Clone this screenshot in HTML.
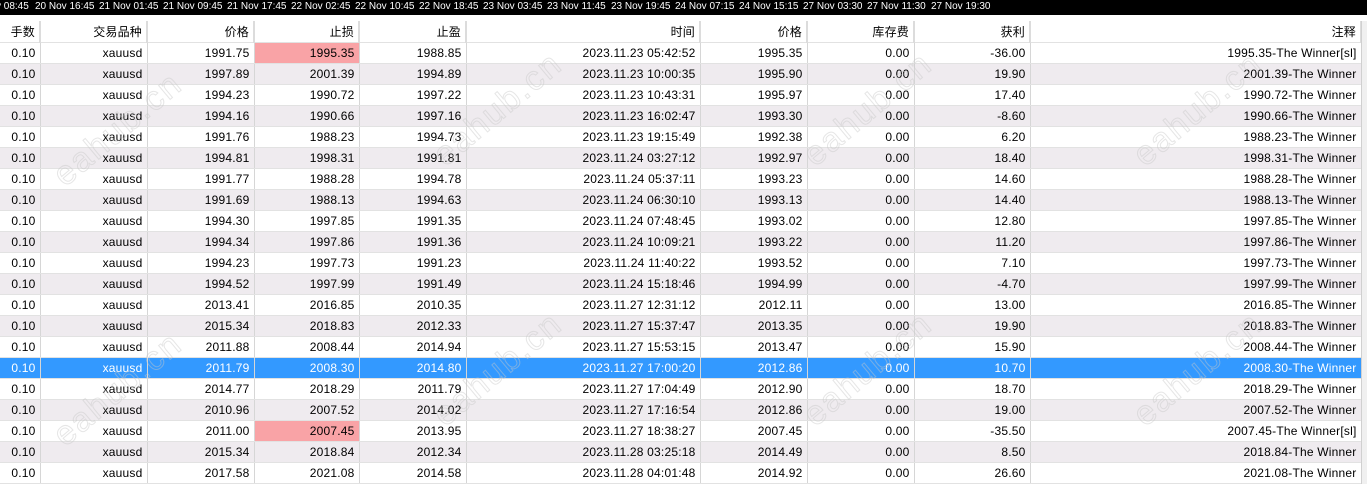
<!DOCTYPE html><html><head><meta charset="utf-8"><style>
body{margin:0;width:1367px;height:484px;overflow:hidden;background:#fff;font-family:"Liberation Sans","Noto Sans CJK SC",sans-serif;font-size:12px;position:relative}
.top{position:absolute;left:0;top:0;width:1367px;height:15px;background:#000;color:#fff;font-size:10px;line-height:13px;white-space:nowrap}
.top span{position:absolute;top:0}
.strip{position:absolute;top:15px;left:0;width:1367px;height:6px;background:#fff;border-bottom:1px solid #c8c8c8}
table{position:absolute;left:0;top:21px;border-collapse:collapse;table-layout:fixed;width:1361px}
td{height:20px;padding:0 4px 0 0;text-align:right;border-right:1px solid #d6d6d6;border-bottom:1px solid #e2e2e2;white-space:nowrap;overflow:hidden;color:#000;box-sizing:border-box;letter-spacing:0.2px}
tr{height:21px}
tr.h td{background:#fff;border-right:2px solid #dcdcdc}
tr:nth-child(odd):not(.h) td{background:#efebef}
tr.s td{background:#3399ff!important;color:#fff}
td.r{background:#f9a3a6!important}
.sb{position:absolute;left:1361px;top:21px;width:6px;height:463px;background:#f0f0f0;border-left:1px solid #d0d0d0}
.wm{position:absolute;color:transparent;-webkit-text-stroke:1px rgba(200,200,200,.45);font-size:34px;transform:rotate(-40deg);font-family:"Liberation Sans",sans-serif;letter-spacing:2px}
</style></head><body>
<div class="top"><span style="left:-4px">v 08:45</span><span style="left:35px">20 Nov 16:45</span><span style="left:99px">21 Nov 01:45</span><span style="left:163px">21 Nov 09:45</span><span style="left:227px">21 Nov 17:45</span><span style="left:291px">22 Nov 02:45</span><span style="left:355px">22 Nov 10:45</span><span style="left:419px">22 Nov 18:45</span><span style="left:483px">23 Nov 03:45</span><span style="left:547px">23 Nov 11:45</span><span style="left:611px">23 Nov 19:45</span><span style="left:675px">24 Nov 07:15</span><span style="left:739px">24 Nov 15:15</span><span style="left:803px">27 Nov 03:30</span><span style="left:867px">27 Nov 11:30</span><span style="left:931px">27 Nov 19:30</span></div>
<div class="strip"></div>
<table>
<colgroup><col style="width:40px"><col style="width:107px"><col style="width:107px"><col style="width:105px"><col style="width:107px"><col style="width:234px"><col style="width:107px"><col style="width:107px"><col style="width:116px"><col style="width:331px"></colgroup>
<tr class="h"><td>手数</td><td>交易品种</td><td>价格</td><td>止损</td><td>止盈</td><td>时间</td><td>价格</td><td>库存费</td><td>获利</td><td>注释</td></tr>
<tr><td>0.10</td><td>xauusd</td><td>1991.75</td><td class="r">1995.35</td><td>1988.85</td><td>2023.11.23 05:42:52</td><td>1995.35</td><td>0.00</td><td>-36.00</td><td>1995.35-The Winner[sl]</td></tr>
<tr><td>0.10</td><td>xauusd</td><td>1997.89</td><td>2001.39</td><td>1994.89</td><td>2023.11.23 10:00:35</td><td>1995.90</td><td>0.00</td><td>19.90</td><td>2001.39-The Winner</td></tr>
<tr><td>0.10</td><td>xauusd</td><td>1994.23</td><td>1990.72</td><td>1997.22</td><td>2023.11.23 10:43:31</td><td>1995.97</td><td>0.00</td><td>17.40</td><td>1990.72-The Winner</td></tr>
<tr><td>0.10</td><td>xauusd</td><td>1994.16</td><td>1990.66</td><td>1997.16</td><td>2023.11.23 16:02:47</td><td>1993.30</td><td>0.00</td><td>-8.60</td><td>1990.66-The Winner</td></tr>
<tr><td>0.10</td><td>xauusd</td><td>1991.76</td><td>1988.23</td><td>1994.73</td><td>2023.11.23 19:15:49</td><td>1992.38</td><td>0.00</td><td>6.20</td><td>1988.23-The Winner</td></tr>
<tr><td>0.10</td><td>xauusd</td><td>1994.81</td><td>1998.31</td><td>1991.81</td><td>2023.11.24 03:27:12</td><td>1992.97</td><td>0.00</td><td>18.40</td><td>1998.31-The Winner</td></tr>
<tr><td>0.10</td><td>xauusd</td><td>1991.77</td><td>1988.28</td><td>1994.78</td><td>2023.11.24 05:37:11</td><td>1993.23</td><td>0.00</td><td>14.60</td><td>1988.28-The Winner</td></tr>
<tr><td>0.10</td><td>xauusd</td><td>1991.69</td><td>1988.13</td><td>1994.63</td><td>2023.11.24 06:30:10</td><td>1993.13</td><td>0.00</td><td>14.40</td><td>1988.13-The Winner</td></tr>
<tr><td>0.10</td><td>xauusd</td><td>1994.30</td><td>1997.85</td><td>1991.35</td><td>2023.11.24 07:48:45</td><td>1993.02</td><td>0.00</td><td>12.80</td><td>1997.85-The Winner</td></tr>
<tr><td>0.10</td><td>xauusd</td><td>1994.34</td><td>1997.86</td><td>1991.36</td><td>2023.11.24 10:09:21</td><td>1993.22</td><td>0.00</td><td>11.20</td><td>1997.86-The Winner</td></tr>
<tr><td>0.10</td><td>xauusd</td><td>1994.23</td><td>1997.73</td><td>1991.23</td><td>2023.11.24 11:40:22</td><td>1993.52</td><td>0.00</td><td>7.10</td><td>1997.73-The Winner</td></tr>
<tr><td>0.10</td><td>xauusd</td><td>1994.52</td><td>1997.99</td><td>1991.49</td><td>2023.11.24 15:18:46</td><td>1994.99</td><td>0.00</td><td>-4.70</td><td>1997.99-The Winner</td></tr>
<tr><td>0.10</td><td>xauusd</td><td>2013.41</td><td>2016.85</td><td>2010.35</td><td>2023.11.27 12:31:12</td><td>2012.11</td><td>0.00</td><td>13.00</td><td>2016.85-The Winner</td></tr>
<tr><td>0.10</td><td>xauusd</td><td>2015.34</td><td>2018.83</td><td>2012.33</td><td>2023.11.27 15:37:47</td><td>2013.35</td><td>0.00</td><td>19.90</td><td>2018.83-The Winner</td></tr>
<tr><td>0.10</td><td>xauusd</td><td>2011.88</td><td>2008.44</td><td>2014.94</td><td>2023.11.27 15:53:15</td><td>2013.47</td><td>0.00</td><td>15.90</td><td>2008.44-The Winner</td></tr>
<tr class="s"><td>0.10</td><td>xauusd</td><td>2011.79</td><td>2008.30</td><td>2014.80</td><td>2023.11.27 17:00:20</td><td>2012.86</td><td>0.00</td><td>10.70</td><td>2008.30-The Winner</td></tr>
<tr><td>0.10</td><td>xauusd</td><td>2014.77</td><td>2018.29</td><td>2011.79</td><td>2023.11.27 17:04:49</td><td>2012.90</td><td>0.00</td><td>18.70</td><td>2018.29-The Winner</td></tr>
<tr><td>0.10</td><td>xauusd</td><td>2010.96</td><td>2007.52</td><td>2014.02</td><td>2023.11.27 17:16:54</td><td>2012.86</td><td>0.00</td><td>19.00</td><td>2007.52-The Winner</td></tr>
<tr><td>0.10</td><td>xauusd</td><td>2011.00</td><td class="r">2007.45</td><td>2013.95</td><td>2023.11.27 18:38:27</td><td>2007.45</td><td>0.00</td><td>-35.50</td><td>2007.45-The Winner[sl]</td></tr>
<tr><td>0.10</td><td>xauusd</td><td>2015.34</td><td>2018.84</td><td>2012.34</td><td>2023.11.28 03:25:18</td><td>2014.49</td><td>0.00</td><td>8.50</td><td>2018.84-The Winner</td></tr>
<tr><td>0.10</td><td>xauusd</td><td>2017.58</td><td>2021.08</td><td>2014.58</td><td>2023.11.28 04:01:48</td><td>2014.92</td><td>0.00</td><td>26.60</td><td>2021.08-The Winner</td></tr>
</table>
<div class="sb"></div>
<div class="wm" style="left:40px;top:110px">eahub.cn</div>
<div class="wm" style="left:420px;top:90px">eahub.cn</div>
<div class="wm" style="left:790px;top:90px">eahub.cn</div>
<div class="wm" style="left:1120px;top:90px">eahub.cn</div>
<div class="wm" style="left:40px;top:370px">eahub.cn</div>
<div class="wm" style="left:420px;top:350px">eahub.cn</div>
<div class="wm" style="left:790px;top:350px">eahub.cn</div>
<div class="wm" style="left:1120px;top:350px">eahub.cn</div>
</body></html>
